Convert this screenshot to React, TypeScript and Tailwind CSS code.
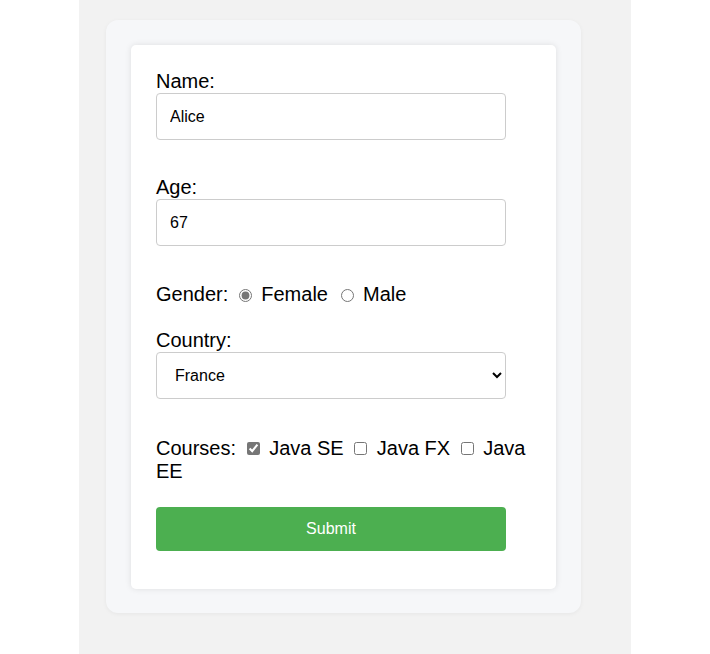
export default function App() {
  return (
    <div className="min-h-[654px] bg-white font-['Liberation_Sans',Arial,sans-serif] text-black">
      <div className="mx-auto min-h-[654px] w-[552px] bg-[#f2f2f2] pt-[20px]">
        <div className="ml-[27px] w-[475px] rounded-[12px] bg-[#f6f7f9] px-[25px] pb-[24px] pt-[25px] shadow-[0_1px_4px_rgba(0,0,0,0.05)]">
          <form className="flex flex-col rounded-[5px] bg-white px-[25px] pb-[38px] pt-[25px] shadow-[0_0_6px_rgba(0,0,0,0.1)]">
            <label className="text-[20px] leading-[23px]">Name:</label>
            <input
              type="text"
              defaultValue="Alice"
              className="h-[47px] w-[350px] rounded-[4px] border border-[#ccc] px-[13px] text-[16px] outline-none"
            />

            <label className="mt-[36px] text-[20px] leading-[23px]">Age:</label>
            <input
              type="text"
              defaultValue="67"
              className="h-[47px] w-[350px] rounded-[4px] border border-[#ccc] px-[13px] text-[16px] outline-none"
            />

            <div className="mt-[37px] flex items-center text-[20px] leading-[23px]">
              <span>Gender:</span>
              <input type="radio" name="gender" defaultChecked className="ml-[11px] mr-[9px] mt-[2px] h-[13px] w-[13px] accent-[#767676]" />
              <span>Female</span>
              <input type="radio" name="gender" className="ml-[13px] mr-[9px] mt-[2px] h-[13px] w-[13px]" />
              <span>Male</span>
            </div>

            <label className="mt-[23px] text-[20px] leading-[23px]">Country:</label>
            <select
              defaultValue="France"
              className="h-[47px] w-[350px] rounded-[4px] border border-[#ccc] bg-white px-[14px] text-[16px] outline-none"
            >
              <option>France</option>
              <option>Germany</option>
              <option>Spain</option>
            </select>

            <div className="mt-[38px] text-[20px] leading-[23px]">
              Courses:{' '}
              <input type="checkbox" defaultChecked className="ml-[5px] mr-[4px] h-[13px] w-[13px] accent-[#767676]" /> Java SE{' '}
              <input type="checkbox" className="ml-[5px] mr-[4px] h-[13px] w-[13px]" /> Java FX{' '}
              <input type="checkbox" className="ml-[5px] mr-[4px] h-[13px] w-[13px]" /> Java EE
            </div>

            <button
              type="button"
              className="mt-[24px] h-[44px] w-[350px] rounded-[4px] bg-[#4caf50] text-[16px] text-white"
            >
              Submit
            </button>
          </form>
        </div>
      </div>
    </div>
  )
}
